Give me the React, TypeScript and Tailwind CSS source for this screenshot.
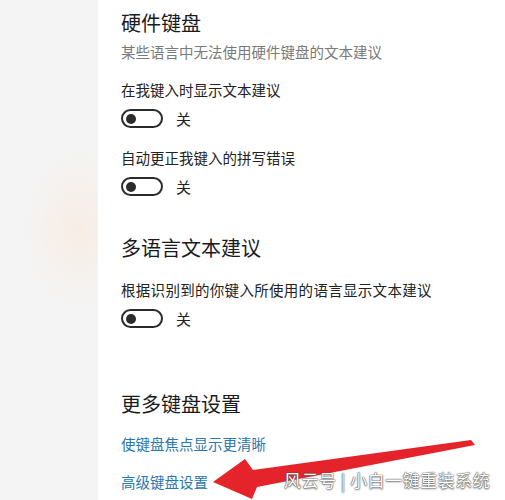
import React from "react";

const font = { fontFamily: '"Noto Sans CJK SC", "Noto Sans", sans-serif' };

function Toggle() {
  return (
    <div className="flex items-center h-[19px]">
      <div className="w-[42px] h-[19px] rounded-full border-2 border-[#2b2b2b] flex items-center pl-[3px]">
        <div className="w-[10px] h-[10px] rounded-full bg-[#2b2b2b]" />
      </div>
      <span className="ml-[13px] text-[15px] leading-[19px] text-[#222]">关</span>
    </div>
  );
}

export default function App() {
  return (
    <div className="relative w-[505px] h-[500px] overflow-hidden flex bg-white" style={font}>
      <div className="w-[98px] h-full bg-[#f4f4f4] bg-[radial-gradient(ellipse_55px_80px_at_80%_46%,rgba(255,222,195,0.32),rgba(244,244,244,0)_100%)]" />
      <div className="flex-1 h-full bg-white pl-[23px] flex flex-col">
        <div className="mt-[9px] text-[20px] leading-[28px] text-[#1b1b1b]">硬件键盘</div>
        <div className="mt-[5px] text-[14.5px] leading-[20px] text-[#7a7a7a]">某些语言中无法使用硬件键盘的文本建议</div>
        <div className="mt-[18px] text-[14.5px] leading-[20px] text-[#222]">在我键入时显示文本建议</div>
        <div className="mt-[9px]"><Toggle /></div>
        <div className="mt-[20px] text-[14.5px] leading-[20px] text-[#222]">自动更正我键入的拼写错误</div>
        <div className="mt-[9px]"><Toggle /></div>
        <div className="mt-[38px] text-[20px] leading-[28px] text-[#1b1b1b]">多语言文本建议</div>
        <div className="mt-[18px] text-[14.5px] leading-[20px] text-[#222] tracking-[0.3px]">根据识别到的你键入所使用的语言显示文本建议</div>
        <div className="mt-[9px]"><Toggle /></div>
        <div className="mt-[62px] text-[20px] leading-[28px] text-[#1b1b1b]">更多键盘设置</div>
        <div className="mt-[16px] text-[14.5px] leading-[20px] text-[#2a78ad]">使键盘焦点显示更清晰</div>
        <div className="mt-[18px] text-[14.5px] leading-[20px] text-[#2a78ad]">高级键盘设置</div>
      </div>
      <svg className="absolute left-0 top-0" width="505" height="500" viewBox="0 0 505 500">
        <polygon
          points="213,482 245,459 253,470 471,440 475,445 257,487 252,499"
          fill="#e4232a"
        />
      </svg>
      <div className="absolute left-[284px] top-[469px] text-[17px] leading-[22px] text-white tracking-[0.5px] [text-shadow:0_0_1px_#444,0_0_1px_#444,0_1px_2px_#777]">
        风云号 | 小白一键重装系统
      </div>
    </div>
  );
}
